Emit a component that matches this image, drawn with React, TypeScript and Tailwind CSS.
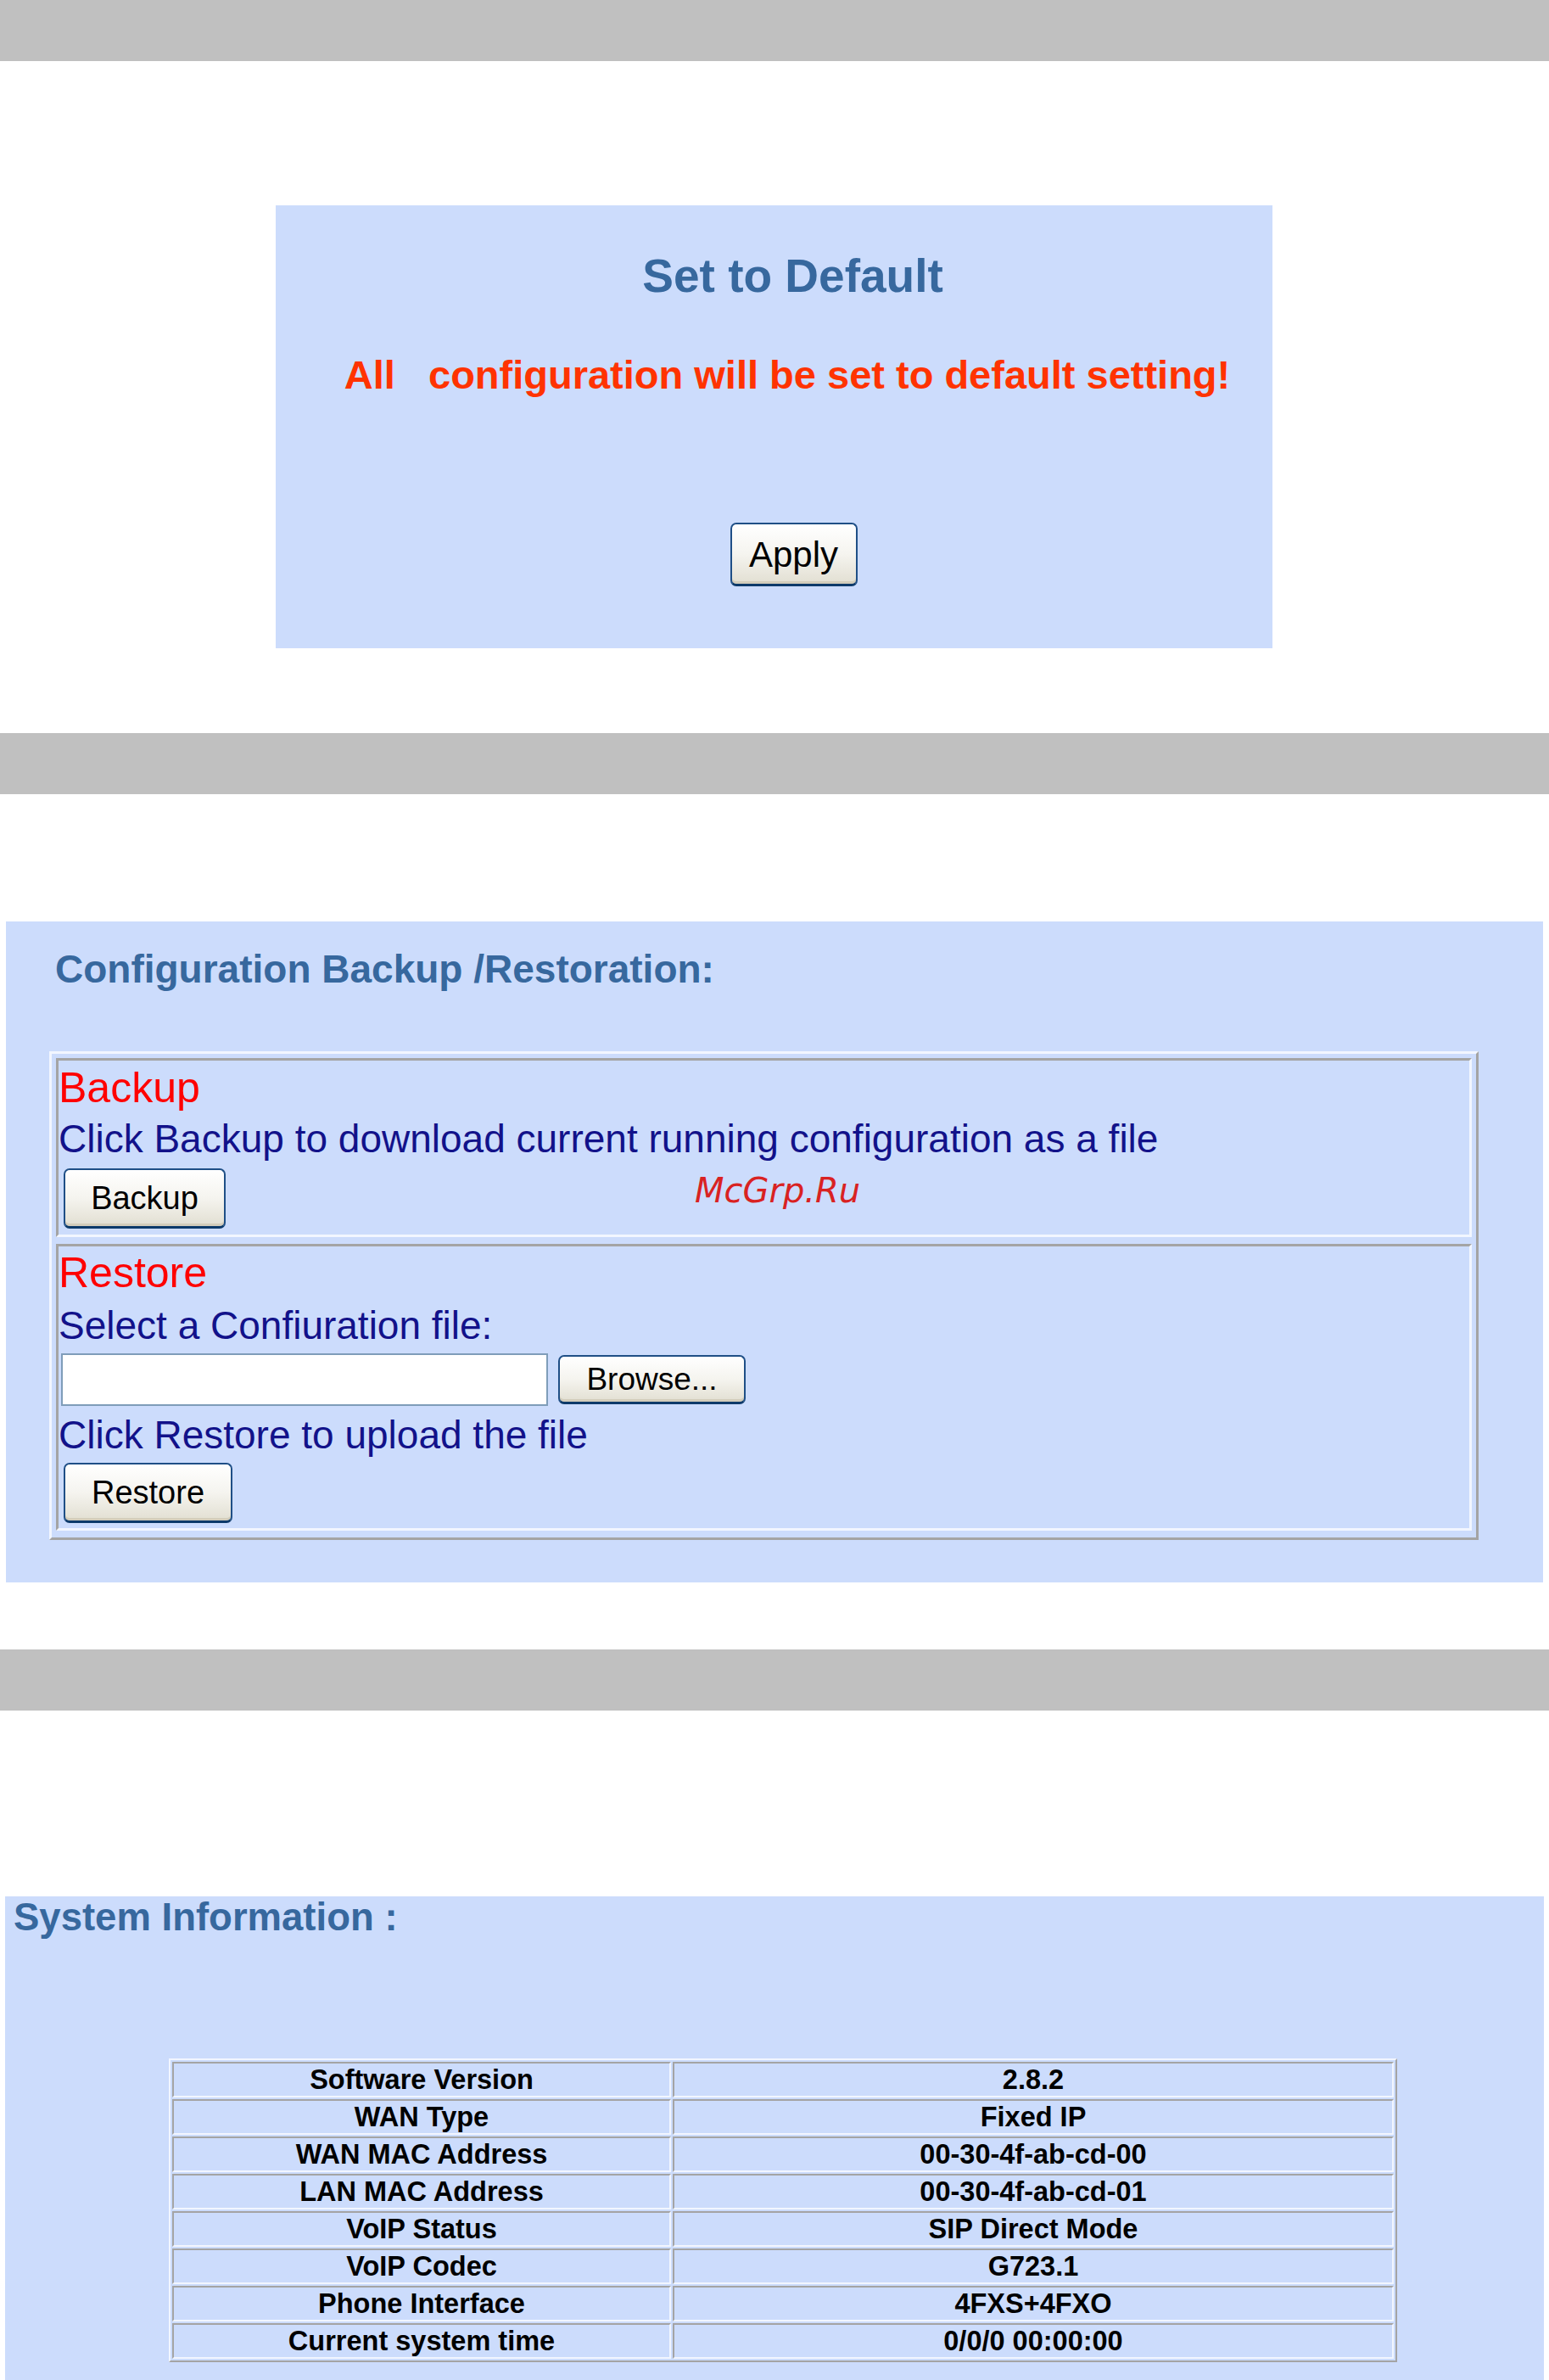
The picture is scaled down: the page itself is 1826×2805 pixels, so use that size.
import React from "react";

const btn =
  "flex items-center justify-center rounded-[7px] border-2 border-[#1f4f86] border-b-[3px] border-b-[#0d3a6a] bg-linear-to-b from-[#ffffff] via-[#f5f4ef] to-[#e2dfd2] text-black shadow-[inset_0_-3px_0_#d3cdbb,inset_0_2px_0_#ffffff] font-['Liberation_Sans',Arial,sans-serif]";

const rows: [string, string][] = [
  ["Software Version", "2.8.2"],
  ["WAN Type", "Fixed IP"],
  ["WAN MAC Address", "00-30-4f-ab-cd-00"],
  ["LAN MAC Address", "00-30-4f-ab-cd-01"],
  ["VoIP Status", "SIP Direct Mode"],
  ["VoIP Codec", "G723.1"],
  ["Phone Interface", "4FXS+4FXO"],
  ["Current system time", "0/0/0 00:00:00"],
];

export default function App() {
  return (
    <div className="relative w-full bg-white font-['Liberation_Sans',Arial,sans-serif]">
      {/* bar 1 */}
      <div className="h-[72px] bg-[#c0c0c0]" />

      {/* Set to default */}
      <div className="mt-[170px] ml-[325px] w-[1175px] h-[522px] bg-[#ccdcfc] pl-[60px] pt-[56px] flex flex-col items-center">
        <div className="mr-[16px] text-[55px] leading-[54px] font-bold text-[#37689e]">Set to Default</div>
        <div className="mt-[66px] mr-[29px] text-[47px] leading-[48px] font-bold text-[#ff3300] whitespace-pre">
          {"All   configuration will be set to default setting!"}
        </div>
        <button className={btn + " mt-[150px] mr-[14px] w-[150px] h-[75px] text-[42px]"}>Apply</button>
      </div>

      {/* bar 2 */}
      <div className="mt-[100px] h-[72px] bg-[#c0c0c0]" />

      {/* Backup / Restore */}
      <div className="mt-[150px] ml-[7px] w-[1812px] h-[779px] bg-[#ccdcfc] pt-[33px]">
        <div className="ml-[58px] text-[46px] leading-[46px] font-bold text-[#37689e]">
          Configuration Backup /Restoration:
        </div>
        <div className="mt-[74px] ml-[51px] w-[1685px] border-[3px] border-t-[#f2f6ff] border-l-[#f2f6ff] border-r-[#a4a4a4] border-b-[#a4a4a4] pt-[5px] px-[5px] pb-[8px] flex flex-col gap-[8px]">
          <div className="border-[3px] border-t-[#a4a4a4] border-l-[#a4a4a4] border-r-[#f2f6ff] border-b-[#f2f6ff] pb-[7px] flex flex-col items-start">
            <div className="mt-[7px] text-[50px] leading-[50px] text-[#ff0000]">Backup</div>
            <div className="mt-[12px] text-[46px] leading-[46px] text-[#12128a]">
              Click Backup to download current running configuration as a file
            </div>
            <button className={btn + " mt-[12px] ml-[6px] w-[191px] h-[71px] text-[38px]"}>Backup</button>
          </div>
          <div className="border-[3px] border-t-[#a4a4a4] border-l-[#a4a4a4] border-r-[#f2f6ff] border-b-[#f2f6ff] pb-[6px] flex flex-col items-start">
            <div className="mt-[6px] text-[50px] leading-[50px] text-[#ff0000]">Restore</div>
            <div className="mt-[14px] text-[46px] leading-[46px] text-[#12128a]">Select a Confiuration file:</div>
            <div className="mt-[10px] ml-[3px] flex items-start gap-[12px]">
              <div className="w-[574px] h-[62px] bg-white border-2 border-[#7f9db9]" />
              <button className={btn + " mt-[2px] w-[221px] h-[58px] text-[37px]"}>Browse...</button>
            </div>
            <div className="mt-[11px] text-[46px] leading-[46px] text-[#12128a]">Click Restore to upload the file</div>
            <button className={btn + " mt-[10px] ml-[6px] w-[199px] h-[71px] text-[38px]"}>Restore</button>
          </div>
        </div>
      </div>

      {/* bar 3 */}
      <div className="mt-[79px] h-[72px] bg-[#c0c0c0]" />

      {/* System information */}
      <div className="mt-[219px] ml-[6px] w-[1814px] h-[570px] bg-[#ccdcfc] pt-[2px]">
        <div className="ml-[10px] text-[45.5px] leading-[45px] font-bold text-[#37689e]">System Information :</div>
        <table className="mt-[144px] ml-[193px] w-[1448px] table-fixed border-separate border-spacing-[2px] border-2 border-t-[#f2f6ff] border-l-[#f2f6ff] border-r-[#a4a4a4] border-b-[#a4a4a4]">
          <tbody>
            {rows.map(([k, v]) => (
              <tr key={k}>
                <td className="w-[588px] p-0 border-2 border-t-[#a4a4a4] border-l-[#a4a4a4] border-r-[#f2f6ff] border-b-[#f2f6ff]">
                  <div className="h-[38px] leading-[38px] text-center text-[32.5px] font-bold text-black">{k}</div>
                </td>
                <td className="p-0 border-2 border-t-[#a4a4a4] border-l-[#a4a4a4] border-r-[#f2f6ff] border-b-[#f2f6ff]">
                  <div className="h-[38px] leading-[38px] text-center text-[32.5px] font-bold text-black">{v}</div>
                </td>
              </tr>
            ))}
          </tbody>
        </table>
      </div>

      {/* watermark */}
      <div className="absolute left-[819px] top-[1383px] text-[40px] leading-[40px] italic text-[#d92222] font-['DejaVu_Sans',sans-serif]">
        McGrp.Ru
      </div>
    </div>
  );
}
